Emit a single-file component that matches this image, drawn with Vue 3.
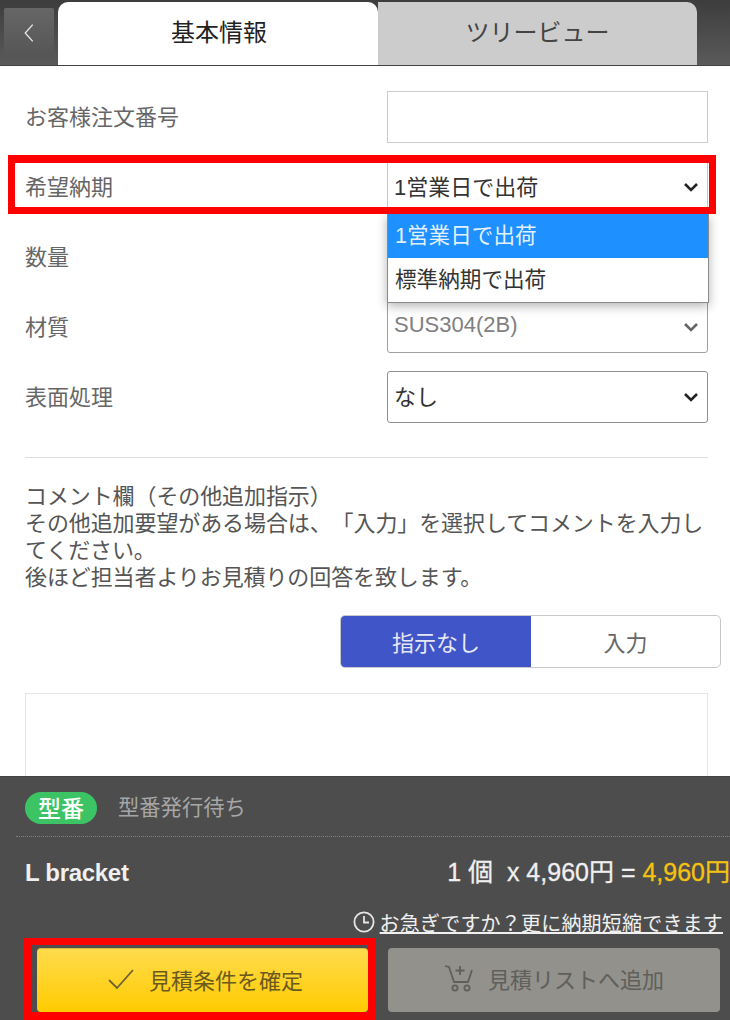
<script setup>
const rows = [
  { label: '希望納期', value: '1営業日で出荷', type: 'active' },
  { label: '数量', value: '', type: 'plain' },
  { label: '材質', value: 'SUS304(2B)', type: 'disabled' },
  { label: '表面処理', value: 'なし', type: 'plain' }
];

const comments = [
  'コメント欄（その他追加指示）',
  'その他追加要望がある場合は、「入力」を選択してコメントを入力し',
  'てください。',
  '後ほど担当者よりお見積りの回答を致します。'
];
</script>

<template>
  <div class="page">
    <header class="top-bar">
      <button class="back-btn">
        <svg width="12" height="20" viewBox="0 0 14 24" fill="none" stroke="#e8e8e8" stroke-width="1.6">
          <path d="M11.5 2 L2.5 12 L11.5 22" />
        </svg>
      </button>
      <div class="tab tab-on">基本情報</div>
      <div class="tab tab-off">ツリービュー</div>
    </header>

    <main class="content">
      <div class="form-row">
        <label class="form-label">お客様注文番号</label>
        <input class="text-input" type="text" />
      </div>

      <div v-for="row in rows" :key="row.label" class="form-row">
        <label class="form-label">{{ row.label }}</label>
        <div class="select" :class="row.type">
          <span class="select-value">{{ row.value }}</span>
          <svg class="chevron" width="16" height="10" viewBox="0 0 16 10" fill="none" stroke-width="2.6">
            <path d="M2 2 L8 8 L14 2" />
          </svg>
        </div>
      </div>

      <div class="divider"></div>

      <div class="comment">
        <div v-for="line in comments" :key="line">{{ line }}</div>
      </div>

      <div class="toggle-wrap">
        <div class="toggle">
          <div class="toggle-item on">指示なし</div>
          <div class="toggle-item">入力</div>
        </div>
      </div>

      <textarea class="comment-box"></textarea>

      <!-- 드롭다운 / 강조 표시는 폼 위에 겹침 -->
      <div class="dropdown">
        <div class="option selected">1営業日で出荷</div>
        <div class="option">標準納期で出荷</div>
      </div>
      <div class="mark mark-delivery"></div>
    </main>

    <footer class="bottom">
      <div class="model-row">
        <span class="badge">型番</span>
        <span class="model-text">型番発行待ち</span>
      </div>
      <div class="price-row">
        <span class="product">L bracket</span>
        <span class="price">1 個&nbsp; x 4,960円 = <em>4,960円</em></span>
      </div>
      <div class="rush-row">
        <svg width="22" height="22" viewBox="0 0 22 22" fill="none" stroke="#e6e6e6" stroke-width="1.8">
          <circle cx="11" cy="11" r="9.6" />
          <path d="M11 5 V11.5 H16" />
        </svg>
        <a class="rush-link">お急ぎですか？更に納期短縮できます</a>
      </div>
      <div class="buttons">
        <div class="btn-mark">
          <button class="btn btn-yellow">
            <svg width="28" height="22" viewBox="0 0 28 22" fill="none" stroke="#6b6232" stroke-width="1.8">
              <path d="M2 12 L10 20 L26 2" />
            </svg>
            見積条件を確定
          </button>
        </div>
        <button class="btn btn-gray">
          <svg width="30" height="28" viewBox="0 0 30 28" fill="none" stroke="#5f5f5b" stroke-width="1.8">
            <path d="M1 2 L5 3 L10 18 H24 L28 6" />
            <path d="M16 2 V11 M11.5 6.5 H20.5" />
            <circle cx="11" cy="24" r="2.6" />
            <circle cx="23" cy="24" r="2.6" />
          </svg>
          見積リストへ追加
        </button>
      </div>
    </footer>
  </div>
</template>

<style scoped>
.page {
  width: 730px;
  height: 1020px;
  display: flex;
  flex-direction: column;
  overflow: hidden;
  background: #fff;
  color: #555;
  font-family: "Liberation Sans", "Noto Sans CJK JP", sans-serif;
  font-size: 22px;
}

.top-bar {
  height: 66px;
  flex-shrink: 0;
  box-sizing: border-box;
  padding: 2px 0 0 4px;
  display: flex;
  background: linear-gradient(#3d3d3d, #5a5a5a);
  border-bottom: 1px solid #444;
}

.back-btn {
  width: 50px;
  height: 50px;
  margin: 6px 4px 0 0;
  padding: 0;
  border: none;
  border-radius: 2px;
  background: linear-gradient(#666, #555);
  display: flex;
  align-items: center;
  justify-content: center;
}

.tab {
  width: 320px;
  flex-shrink: 0;
  display: flex;
  align-items: center;
  justify-content: center;
  font-size: 24px;
  padding-bottom: 6px;
  box-sizing: border-box;
  border-radius: 10px 10px 0 0;
}

.tab-on {
  background: #fff;
  color: #222;
  padding-left: 2px;
}

.tab-off {
  width: 319px;
  background: #ccc;
  color: #444;
  border-radius: 0 10px 0 0;
}

.content {
  flex: 1;
  min-height: 0;
  position: relative;
  padding: 25px 22px 0 25px;
  overflow: hidden;
}

.form-row {
  display: flex;
  align-items: center;
  justify-content: space-between;
  height: 52px;
  margin-bottom: 18px;
}

.form-label {
  color: #666;
  padding-bottom: 4px;
}

.text-input {
  width: 321px;
  height: 52px;
  box-sizing: border-box;
  border: 1px solid #ccc;
  background: #fff;
  margin: 0;
  outline: none;
}

.select {
  width: 321px;
  height: 52px;
  box-sizing: border-box;
  padding: 0 8px 0 7px;
  border: 1px solid #8f8f8f;
  border-radius: 3px;
  display: flex;
  align-items: center;
  justify-content: space-between;
  color: #333;
}

.select-value {
  padding-bottom: 4px;
  margin-left: -1px;
}

.select .chevron {
  stroke: #222;
}

.select.disabled {
  color: #808080;
  border-color: #a0a0a0;
}

.select.disabled .chevron {
  stroke: #666;
}

.select.active {
  border-color: #b9c6e6;
  border-radius: 0;
}

.divider {
  height: 1px;
  margin: 34px 0 25px;
  background: #ddd;
}

.comment {
  line-height: 27px;
  margin-right: -2px;
  color: #555;
  text-spacing-trim: space-all;
  letter-spacing: -0.1px;
}

.toggle-wrap {
  display: flex;
  justify-content: flex-end;
  margin: 24px -13px 25px 0;
}

.toggle {
  width: 381px;
  height: 53px;
  box-sizing: border-box;
  display: flex;
  border: 1px solid #c8c8c8;
  border-radius: 5px;
  overflow: hidden;
}

.toggle-item {
  flex: 1;
  display: flex;
  align-items: center;
  justify-content: center;
  color: #666;
  padding-bottom: 2px;
}

.toggle-item.on {
  flex: none;
  width: 190px;
  background: #3f55c8;
  color: #e8e8f4;
}

.comment-box {
  display: block;
  width: 683px;
  height: 160px;
  box-sizing: border-box;
  border: 1px solid #e6e6e6;
  margin: 0;
  resize: none;
  outline: none;
}

.dropdown {
  position: absolute;
  left: 387px;
  top: 148px;
  width: 322px;
  background: #fff;
  border: 1px solid #8a8a8a;
  border-top: none;
  box-sizing: border-box;
  box-shadow: 0 3px 10px rgba(0, 0, 0, 0.3);
  color: #333;
}

.option {
  height: 44px;
  box-sizing: border-box;
  padding: 0 0 5px 7px;
  display: flex;
  align-items: center;
  font-size: 21.6px;
}

.option.selected {
  background: #1e90ff;
  color: #e3f1ff;
}

.mark {
  position: absolute;
  box-sizing: border-box;
  border: 7px solid #f00;
}

.mark-delivery {
  left: 8px;
  top: 89px;
  width: 708px;
  height: 59px;
  border-top-width: 8px;
}

.bottom {
  height: 244px;
  flex-shrink: 0;
  box-sizing: border-box;
  background: #4d4d4d;
  border-top: 1px solid #444;
  padding-top: 15px;
}

.model-row {
  margin: 0 0 0 16px;
  padding: 0 0 12px 9px;
  border-bottom: 1px dotted #808080;
  display: flex;
  align-items: center;
  height: 32px;
}

.badge {
  width: 72px;
  height: 32px;
  border-radius: 16px;
  background: #3cc464;
  color: #fff;
  display: flex;
  align-items: center;
  justify-content: center;
  font-size: 23px;
  font-weight: 500;
  padding-bottom: 2px;
  box-sizing: border-box;
}

.model-text {
  margin-left: 21px;
  font-size: 21.3px;
  color: #a6a6a6;
  padding-bottom: 5px;
}

.price-row {
  display: flex;
  justify-content: space-between;
  align-items: center;
  height: 34px;
  margin-top: 17px;
  padding-left: 25px;
  color: #f0f0f0;
  font-size: 25px;
  white-space: nowrap;
}

.product {
  font-weight: 700;
  font-size: 24px;
  letter-spacing: -0.3px;
  padding-top: 4px;
}

.price {
  -webkit-text-stroke: 0.3px currentColor;
  padding-bottom: 2px;
}

.price em {
  font-style: normal;
  color: #f5c211;
}

.rush-row {
  display: flex;
  justify-content: flex-end;
  align-items: center;
  gap: 5px;
  height: 30px;
  margin-top: 19px;
  padding-right: 7px;
}

.rush-link {
  color: #f0f0f0;
  font-size: 20px;
  letter-spacing: 0.2px;
  text-decoration: underline;
}

.buttons {
  display: flex;
  margin-top: 1px;
  padding: 0 10px 0 24px;
  justify-content: space-between;
  align-items: flex-start;
}

.btn-mark {
  border: 7px solid #f00;
  border-bottom-width: 8px;
  padding: 3px 0 0 6px;
  width: 351px;
  height: 82px;
  box-sizing: border-box;
}

.btn {
  height: 64px;
  width: 332px;
  border: none;
  border-radius: 4px;
  display: flex;
  align-items: center;
  justify-content: center;
  gap: 14px;
  font-family: inherit;
  font-size: 22px;
  padding: 0 0 4px;
}

.btn-yellow {
  width: 331px;
  padding-left: 5px;
  background: linear-gradient(#ffdb4d, #ffcb00);
  color: #6b5a1e;
  border-top: 1px solid #d8b840;
}

.btn-gray {
  margin-top: 10px;
  background: #92918c;
  color: #5f5f5b;
}
</style>
